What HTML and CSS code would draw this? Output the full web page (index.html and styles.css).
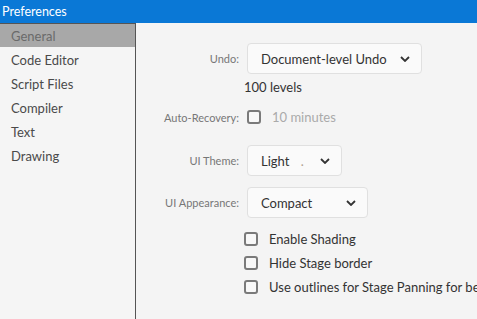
FILE: index.html
```html
<!DOCTYPE html>
<html lang="en">
<head>
    <meta charset="UTF-8">
    <title>Preferences</title>
    <link rel="stylesheet" href="styles.css">
</head>
<body>
    <div class="titlebar">Preferences</div>
    <div class="window">
        <ul class="sidebar">
            <li class="active">General</li>
            <li>Code Editor</li>
            <li>Script Files</li>
            <li>Compiler</li>
            <li>Text</li>
            <li>Drawing</li>
        </ul>

        <div class="settings">
            <div class="row row-undo">
                <span class="label">Undo:</span>
                <div class="select select-undo">
                    <span>Document-level Undo</span>
                    <svg class="chevron" width="10" height="6" viewBox="0 0 10 6"><path d="M1 1 L5 5 L9 1" fill="none" stroke="#333" stroke-width="1.8"/></svg>
                </div>
            </div>
            <div class="row row-levels">
                <span class="label"></span>
                <span class="levels">100 levels</span>
            </div>
            <div class="row row-recovery">
                <span class="label">Auto-Recovery:</span>
                <label class="check disabled"><span class="box"></span>10 minutes</label>
            </div>
            <div class="row row-theme">
                <span class="label">UI Theme:</span>
                <div class="select select-theme">
                    <span>Light <span class="dot">.</span></span>
                    <svg class="chevron" width="10" height="6" viewBox="0 0 10 6"><path d="M1 1 L5 5 L9 1" fill="none" stroke="#333" stroke-width="1.8"/></svg>
                </div>
            </div>
            <div class="row row-appearance">
                <span class="label">UI Appearance:</span>
                <div class="select select-appearance">
                    <span>Compact</span>
                    <svg class="chevron" width="10" height="6" viewBox="0 0 10 6"><path d="M1 1 L5 5 L9 1" fill="none" stroke="#333" stroke-width="1.8"/></svg>
                </div>
            </div>
            <div class="options">
                <label class="check"><span class="box"></span>Enable Shading</label>
                <label class="check"><span class="box"></span>Hide Stage border</label>
                <label class="check"><span class="box"></span>Use outlines for Stage Panning for better performance</label>
            </div>
        </div>
    </div>
</body>
</html>
```

FILE: styles.css
```css
html, body {
    margin: 0;
    height: 100%;
    overflow: hidden;
}
body {
    font-family: Lato, "Open Sans", sans-serif;
    background-color: #f4f4f4;
    display: flex;
    flex-direction: column;
}
.titlebar {
    height: 23px;
    line-height: 23px;
    background-color: #0a78d6;
    color: white;
    font-size: 12.5px;
    padding-left: 2px;
}
.window {
    flex: 1;
    display: flex;
    min-height: 0;
}
.sidebar {
    list-style: none;
    margin: 0;
    padding: 0;
    width: 135px;
    flex-shrink: 0;
    border-top: 1px solid #555;
    border-right: 1px solid #555;
    background-color: #f5f5f5;
}
.sidebar li {
    height: 22px;
    line-height: 22px;
    padding: 2px 0 0 11px;
    font-size: 13px;
    color: #4a4a4a;
}
.sidebar li.active {
    height: 21px;
    line-height: 21px;
    background-color: #a8a8a8;
    color: #6a6a6a;
}
.settings {
    flex: 1;
    display: flex;
    flex-direction: column;
    white-space: nowrap;
    overflow: hidden;
}
.row {
    display: flex;
    align-items: center;
    gap: 8px;
}
.label {
    width: 103px;
    flex-shrink: 0;
    text-align: right;
    font-size: 11px;
    color: #777;
}
.row-undo {
    margin-top: 20px;
}
.row-levels {
    height: 20px;
    margin-top: 3px;
}
.levels {
    margin-left: -3px;
    font-size: 13px;
    color: #333;
}
.row-recovery {
    height: 20px;
    margin-top: 10px;
}
.row-theme {
    margin-top: 18px;
}
.row-appearance {
    margin-top: 11px;
}
.select {
    height: 29px;
    box-sizing: content-box;
    border: 1px solid #e0e0e0;
    border-radius: 4px;
    background-color: #fafafa;
    display: flex;
    align-items: center;
    justify-content: space-between;
    padding: 0 11px 0 13px;
    font-size: 13px;
    color: #333;
}
.select-undo {
    width: 149px;
}
.select-theme {
    width: 69px;
}
.select-appearance {
    width: 95px;
}
.dot {
    color: #b0a090;
    margin-left: 8px;
}
.check {
    display: flex;
    align-items: center;
    font-size: 13px;
    color: #333;
}
.check .box {
    flex-shrink: 0;
    width: 10px;
    height: 10px;
    border: 2px solid #7a7a7a;
    border-radius: 3px;
    background-color: #f8f8f8;
    margin-right: 11px;
}
.check.disabled {
    color: #aaa;
}
.options {
    margin-top: 9px;
    margin-left: 108px;
}
.options .check {
    height: 24px;
}
```
